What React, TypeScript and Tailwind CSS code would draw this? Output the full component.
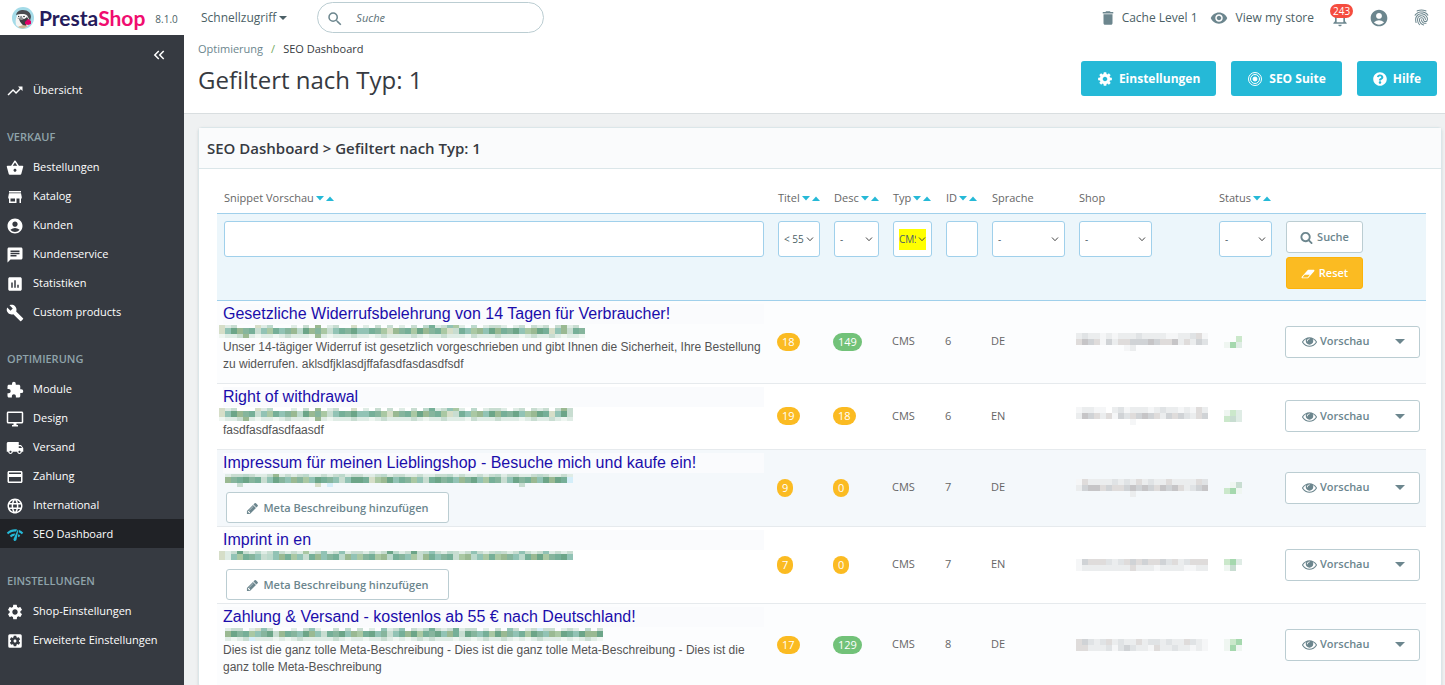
import type { ReactNode } from "react";
import { IoFingerPrint } from "react-icons/io5";
import { FaQuestionCircle } from "react-icons/fa";
import {
  MdAccountCircle,
  MdAssessment,
  MdBuild,
  MdChat,
  MdDelete,
  MdExtension,
  MdKeyboardDoubleArrowLeft,
  MdLanguage,
  MdLocalShipping,
  MdNetworkCheck,
  MdNotificationsNone,
  MdOutlineDesktopWindows,
  MdPayment,
  MdRemoveRedEye,
  MdSearch,
  MdSettings,
  MdSettingsApplications,
  MdShoppingBasket,
  MdStore,
  MdTrendingUp,
} from "react-icons/md";

const navSections = [
  { title: "", items: [{ label: "Übersicht", icon: MdTrendingUp }] },
  {
    title: "VERKAUF",
    items: [
      { label: "Bestellungen", icon: MdShoppingBasket },
      { label: "Katalog", icon: MdStore },
      { label: "Kunden", icon: MdAccountCircle },
      { label: "Kundenservice", icon: MdChat },
      { label: "Statistiken", icon: MdAssessment },
      { label: "Custom products", icon: MdBuild },
    ],
  },
  {
    title: "OPTIMIERUNG",
    items: [
      { label: "Module", icon: MdExtension },
      { label: "Design", icon: MdOutlineDesktopWindows },
      { label: "Versand", icon: MdLocalShipping },
      { label: "Zahlung", icon: MdPayment },
      { label: "International", icon: MdLanguage },
      { label: "SEO Dashboard", icon: MdNetworkCheck, active: true },
    ],
  },
  {
    title: "EINSTELLUNGEN",
    items: [
      { label: "Shop-Einstellungen", icon: MdSettings },
      { label: "Erweiterte Einstellungen", icon: MdSettingsApplications },
    ],
  },
];

const columns = [
  { label: "Snippet Vorschau", sortable: true, width: "" },
  { label: "Titel", sortable: true, width: "w-[56px]" },
  { label: "Desc", sortable: true, width: "w-[59px]" },
  { label: "Typ", sortable: true, width: "w-[53px]" },
  { label: "ID", sortable: true, width: "w-[46px]" },
  { label: "Sprache", sortable: false, width: "w-[87px]" },
  { label: "Shop", sortable: false, width: "w-[140px]" },
  { label: "Status", sortable: true, width: "w-[67px]" },
];

// Pixelated (redacted) values, one letter per 6px block
const urlStrips = [
  [
    "aik...aif...i.k.d.ik..a.i.k.k.i.k.fhikbgi.f.ikki.ik.kik.kdik.",
    "abcdehkbghbedfcdegkbhecbbhegadehgcdehgakhbgdbcdhecbgdchabdkhe",
    "jiikdijiijikiiijdijiiikiijikiiiikijiikiiijkiiikiiijikiikijiij",
  ],
  [
    "aik...aif...i.k.d.ik..a.i.k.k.i.k.fhikbgi.f.ikki.ik.kik.kdk",
    "abcdehkbghbedfcdegkbhecbbhegadehgcdehgakhbgdbcdhecbgdchabck",
    "jiikdijiijikiiijdijiiikiijikiiiikijiikiiijkiiikiiijikiikiji",
  ],
  [
    ".ikkfkiikdikikfiikikfikkiikfikkiikiikkfikiikikfikkiikfkiiki",
    ".dehcehkbcebdegbchebkbcchagdcbhegbkhcehbdecbghekbcehdbcdchl",
    "...k............a.l...............................k........",
  ],
  [
    "aikckifikbkikigikbikbikkifikcfikckfbkifkikbkikfkikbkikbikik",
    "aibghebkfbdhgbkhdbehfdbgehgdfhebgkdhbehkgdfbghgdebfhdcgehcb",
    "...........................................................",
  ],
  [
    ".ikk.iabk...i.kbi..k.f.k.i.bikb.kifhkikhikk.i.k.bk.iklkk.iki.f.k",
    ".dcehgbeckdhebcdbkhecbdghcbekbhdcghecbdhkcebhgcdebhgcebdgchbcddc",
    ".ijikliiijijikiiiiikijiijiikijijikikiiijiijikiikijijikiiijijikij",
  ],
];

const shopStrips = [
  ["uvuuxuxuuuvuuuuxxuuvwx", "wzywxyuwwyyyzywwzuwuyv", "........xu............"],
  ["xuuxx.uvxuuuxuvuuxuxwu", "uzywuwxyvwyzywuywyvuwy", ".........x............"],
  ["xwuuuuvuvuwuvuuwuuuuwv", "uyzzwywwyzyzywzyzwuvyz", ".........u............"],
  ["xywwwvuvwywywwyvwuvwww", "xuuuuuuuuwuuuxuuuuxxuu"],
  ["wyvuvwuvuuwuvvuvuuwvux", "wwuuuvxvyvuuxwuuvuuxux"],
];

const statusStrips = [
  ["..q", "jpi"],
  ["jqi", "qki"],
  [".jk", "qpj"],
  ["qpi", "jk."],
  ["jqp", "jpj"],
];

const palette: Record<string, string> = {
  a: "#d6dec8",
  b: "#92c3b5",
  c: "#6ca588",
  d: "#9ab992",
  e: "#86b59d",
  f: "#bcd9cc",
  g: "#aac8a3",
  h: "#76af98",
  i: "#dfece5",
  j: "#eff6f1",
  k: "#c8ddd1",
  l: "#d4eef9",
  p: "#a5d8ae",
  q: "#cbe8cb",
  u: "#ebedee",
  v: "#e0e3e5",
  w: "#dfdcdb",
  x: "#f5f6f7",
  y: "#d0d3d6",
  z: "#c6c5c7",
};

type Row = {
  title: string;
  desc?: string;
  titleCount: number;
  descCount: number;
  id: number;
  lang: string;
  bg: string;
};

const rows: Row[] = [
  {
    title: "Gesetzliche Widerrufsbelehrung von 14 Tagen für Verbraucher!",
    desc: "Unser 14-tägiger Widerruf ist gesetzlich vorgeschrieben und gibt Ihnen die Sicherheit, Ihre Bestellung zu widerrufen. aklsdfjklasdjffafasdfasdasdfsdf",
    titleCount: 18,
    descCount: 149,
    id: 6,
    lang: "DE",
    bg: "bg-[#fcfdfe]",
  },
  {
    title: "Right of withdrawal",
    desc: "fasdfasdfasdfaasdf",
    titleCount: 19,
    descCount: 18,
    id: 6,
    lang: "EN",
    bg: "bg-white",
  },
  {
    title: "Impressum für meinen Lieblingshop - Besuche mich und kaufe ein!",
    titleCount: 9,
    descCount: 0,
    id: 7,
    lang: "DE",
    bg: "bg-[#f4f8fb]",
  },
  { title: "Imprint in en", titleCount: 7, descCount: 0, id: 7, lang: "EN", bg: "bg-white" },
  {
    title: "Zahlung & Versand - kostenlos ab 55 € nach Deutschland!",
    desc: "Dies ist die ganz tolle Meta-Beschreibung - Dies ist die ganz tolle Meta-Beschreibung - Dies ist die ganz tolle Meta-Beschreibung",
    titleCount: 17,
    descCount: 129,
    id: 8,
    lang: "DE",
    bg: "bg-[#fcfdfe]",
  },
];

const glyphs = {
  eye: "M1664 960q-152-236-381-353 61 104 61 225 0 185-131.5 316.5t-316.5 131.5-316.5-131.5-131.5-316.5q0-121 61-225-229 117-381 353 133 205 333.5 326.5t434.5 121.5 434.5-121.5 333.5-326.5zm-720-384q0-20-14-34t-34-14q-125 0-214.5 89.5t-89.5 214.5q0 20 14 34t34 14 34-14 14-34q0-86 61-147t147-61q20 0 34-14t14-34zm848 384q0 34-20 69-140 230-376.5 368.5t-499.5 138.5-499.5-139-376.5-368q-20-35-20-69t20-69q140-229 376.5-368t499.5-139 499.5 139 376.5 368q20 35 20 69z",
  search:
    "M1216 832q0-185-131.5-316.5t-316.5-131.5-316.5 131.5-131.5 316.5 131.5 316.5 316.5 131.5 316.5-131.5 131.5-316.5zm512 832q0 52-38 90t-90 38q-54 0-90-38l-343-342q-179 124-399 124-143 0-273.5-55.5t-225-150-150-225-55.5-273.5 55.5-273.5 150-225 225-150 273.5-55.5 273.5 55.5 225 150 150 225 55.5 273.5q0 220-124 399l343 343q37 37 37 90z",
  eraser:
    "M960 1408l336-384h-768l-336 384h768zm1013-1077q15 34 9.5 71.5t-30.5 65.5l-896 1024q-38 44-96 44h-768q-38 0-69.5-20.5t-47.5-54.5q-15-34-9.5-71.5t30.5-65.5l896-1024q38-44 96-44h768q38 0 69.5 20.5t47.5 54.5z",
  pencil:
    "M491 1536l91-91-235-235-91 91v107h128v128h107zm523-928q0-22-22-22-10 0-17 7l-542 542q-7 7-7 17 0 22 22 22 10 0 17-7l542-542q7-7 7-17zm-54-192l416 416-832 832h-416v-416zm683 96q0 53-37 90l-166 166-416-416 166-165q36-38 90-38 53 0 91 38l235 234q37 39 37 91z",
  cog: "M1152 896q0-106-75-181t-181-75-181 75-75 181 75 181 181 75 181-75 75-181zm512-109v222q0 12-8 23t-20 13l-185 28q-19 54-39 91 35 50 107 138 10 12 10 25t-9 23q-27 37-99 108t-94 71q-12 0-26-9l-138-108q-44 23-91 38-16 136-29 186-7 28-36 28h-222q-14 0-24.5-8.5t-11.5-21.5l-28-184q-49-16-90-37l-141 107q-10 9-25 9-14 0-25-11-126-114-165-168-7-10-7-23 0-12 8-23 15-21 51-66.5t54-70.5q-27-50-41-99l-183-27q-13-2-21-12.5t-8-23.5v-222q0-12 8-23t19-13l186-28q14-46 39-92-40-57-107-138-10-12-10-24 0-10 9-23 26-36 98.5-107.5t94.5-71.5q13 0 26 10l138 107q44-23 91-38 16-136 29-186 7-28 36-28h222q14 0 24.5 8.5t11.5 21.5l28 184q49 16 90 37l142-107q9-9 24-9 13 0 25 10 129 119 165 170 7 8 7 22 0 12-8 23-15 21-51 66.5t-54 70.5q26 50 41 98l183 28q13 2 21 12.5t8 23.5z",
};

function Glyph({ name, className }: { name: keyof typeof glyphs; className: string }) {
  return (
    <svg
      viewBox={name === "eraser" ? "0 0 2048 1792" : "0 0 1792 1792"}
      className={`shrink-0 fill-current ${className}`}
      aria-hidden="true"
    >
      <path d={glyphs[name]} />
    </svg>
  );
}

// heights: block height for each line of the strip
function Mosaic({ lines, heights, className = "" }: { lines: string[]; heights: number[]; className?: string }) {
  const width = Math.max(...lines.map((l) => l.length)) * 6;
  const used = heights.slice(0, lines.length);
  const tops = used.map((_, i) => used.slice(0, i).reduce((a, b) => a + b, 0));
  const height = used.reduce((a, b) => a + b, 0);

  return (
    <svg
      width={width}
      height={height}
      viewBox={`0 0 ${width} ${height}`}
      shapeRendering="crispEdges"
      className={`block ${className}`}
      aria-hidden="true"
    >
      {lines.flatMap((line, y) =>
        line.split("").map((c, x) =>
          palette[c] ? (
            <rect key={`${x}-${y}`} x={x * 6} y={tops[y]} width={6} height={used[y]} fill={palette[c]} />
          ) : null,
        ),
      )}
    </svg>
  );
}

function Logo() {
  return (
    <a href="#" className="flex items-center gap-[5px] text-[21px] leading-8">
      <svg viewBox="0 0 22 22" className="size-[22px]" aria-hidden="true">
        <circle cx="11" cy="11" r="11" fill="#a4dbe8" />
        <path d="M4 18c-1-5 0-9 3-12l9 1c2 4 2 9-1 13-3 2-9 1-11-2z" fill="#f5f4f2" />
        <path d="M4 8c1-4 4-5 7-5 5 0 8 3 8 7l-1 4-2-4c-1-3-4-3-6-3-2 0-4 0-6 1z" fill="#4a4b50" />
        <path d="M7 12c3 1 6 0 8-2l2 3-3 3c1 2 0 3-1 4-2-2-5-4-6-8z" fill="#3c3d42" />
        <path d="M5 11c1-2 5-3 8-1l-2 2c-2 1-4 0-6-1z" fill="#8e9194" />
        <circle cx="6.500" cy="9.500" r="1.600" fill="#fff" />
        <circle cx="12" cy="9.500" r="1.900" fill="#fff" />
        <circle cx="6.700" cy="9.500" r=".7" fill="#222" />
        <circle cx="12" cy="9.500" r=".8" fill="#222" />
        <path d="M13 15l3-3 3 2v3l-3 1-3-1z" fill="#df0067" />
        <path d="M6 20c3-2 7-2 10-1-3 3-7 3-10 1z" fill="#cbb394" />
      </svg>
      <span className="font-['Lato','Open_Sans',sans-serif] font-bold text-[#251b5b]">
        Presta<span className="text-[#f00d70]">Shop</span>
      </span>
    </a>
  );
}

function TopBar() {
  return (
    <header className="flex h-[35px] shrink-0 items-center bg-white text-xs text-[#4b5f66]">
      <div className="flex w-[201px] shrink-0 items-center gap-2.5 pl-3">
        <Logo />
        <span className="pt-1 text-[10px]">8.1.0</span>
      </div>
      <button type="button" className="flex items-center gap-[3px]">
        Schnellzugriff
        <svg viewBox="0 0 8 4" className="w-2 fill-current" aria-hidden="true">
          <path d="M0 0h8L4 4z" />
        </svg>
      </button>
      <label className="ml-[30px] flex h-[31px] w-[227px] items-center gap-3 rounded-full border border-[#bbcdd2] pt-0.5 pr-4 pl-2">
        <MdSearch className="size-[18px] shrink-0 text-[#6c868e]" />
        <input
          type="text"
          aria-label="Suche"
          placeholder="Suche"
          className="min-w-0 flex-1 bg-transparent text-[11px] italic outline-none placeholder:text-[#5a6f76]"
        />
      </label>
      <nav className="ml-auto flex items-center pr-[15px]">
        <a href="#" className="flex items-center gap-[5px]">
          <MdDelete className="size-[18px] text-[#6c868e]" />
          Cache Level 1
        </a>
        <a href="#" className="ml-3 flex items-center gap-2">
          <MdRemoveRedEye className="size-[18px] text-[#6c868e]" />
          View my store
        </a>
        <button type="button" aria-label="Benachrichtigungen" className="relative ml-4">
          <MdNotificationsNone className="size-5 text-[#6c868e]" />
          <span className="absolute -top-1 left-0 rounded-full bg-[#f54c3e] px-[3px] text-[10px] leading-[14px] text-white">
            243
          </span>
        </button>
        <button type="button" aria-label="Konto" className="ml-[19px]">
          <MdAccountCircle className="size-5 text-[#6c868e]" />
        </button>
        <button type="button" aria-label="Anmeldung" className="ml-6">
          <IoFingerPrint className="size-[17px] text-[#6c868e]" />
        </button>
      </nav>
    </header>
  );
}

function Sidebar() {
  return (
    <aside className="flex w-[184px] shrink-0 flex-col bg-[#363a41] text-white">
      <div className="flex h-10 items-center justify-end pr-4">
        <button type="button" aria-label="Menü einklappen">
          <MdKeyboardDoubleArrowLeft className="size-[18px]" />
        </button>
      </div>
      <nav className="flex flex-col gap-[18px] text-[11px]">
        {navSections.map((section) => (
          <div key={section.title}>
            {section.title && (
              <h2 className="pl-[7px] leading-[30px] font-semibold text-[#8fa3aa]">{section.title}</h2>
            )}
            {section.items.map(({ label, icon: Icon, active }: { label: string; icon: typeof MdStore; active?: boolean }) => (
              <a
                key={label}
                href="#"
                className={`flex h-[29px] items-center gap-[9px] pt-0.5 pl-1.5 ${active ? "bg-[#202226]" : ""}`}
              >
                <Icon className={`size-[18px] shrink-0 ${active ? "text-[#25b9d7]" : ""}`} />
                {label}
              </a>
            ))}
          </div>
        ))}
      </nav>
    </aside>
  );
}

function HeaderButton({ icon, children }: { icon: ReactNode; children: ReactNode }) {
  return (
    <button
      type="button"
      className="flex h-[35px] items-center gap-1.5 rounded-[3px] bg-[#25b9d7] px-4 text-xs font-bold text-white"
    >
      {icon}
      {children}
    </button>
  );
}

function SortArrows() {
  return (
    <svg viewBox="0 0 18 5" className="ml-0.5 inline-block h-[5px] w-[18px] fill-[#25b9d7]" aria-hidden="true">
      <path d="M0 0h8L4 4.500z" />
      <path d="M10 5h8L14 .5z" />
    </svg>
  );
}

function FilterSelect({ label, value, marked }: { label: string; value: string; marked?: boolean }) {
  return (
    <div className="relative flex h-9 items-center rounded-[3px] border border-[#a0d0eb] bg-white px-[5px] pt-0.5 text-[#4b5f66]">
      <select
        aria-label={label}
        className={`h-[21px] w-full min-w-0 appearance-none text-[10px] outline-none ${marked ? "bg-[#ff0] pr-2.5" : "bg-white"}`}
      >
        <option>{value}</option>
      </select>
      <svg
        viewBox="0 0 8 5"
        className="pointer-events-none absolute right-[5px] h-[5px] w-2 fill-none stroke-[#444]"
        aria-hidden="true"
      >
        <path d="M1 .5l3 3.200L7 .5" />
      </svg>
    </div>
  );
}

function Count({ value }: { value: number }) {
  return (
    <span
      className={`inline-block rounded-full px-[5px] text-[11px] leading-[18px] font-medium text-white ${value > 100 ? "bg-[#72c279]" : "bg-[#fbbb22]"}`}
    >
      {value}
    </span>
  );
}

function SnippetRow({ row, index }: { row: Row; index: number }) {
  return (
    <tr className={`border-b border-[#e6eaed] ${row.bg}`}>
      <td className="pt-[3px] pr-[7px] pl-1.5 align-top font-['Liberation_Sans',sans-serif]">
        <a href="#" className="block truncate bg-[#fafbfd] text-base leading-5 text-[#1a0dab]">
          {row.title}
        </a>
        <div className="flex h-[15px] items-center">
          <Mosaic lines={urlStrips[index]} heights={[3, 6, 4]} className="-ml-1 shrink-0" />
        </div>
        {row.desc ? (
          <p className="pb-2.5 text-xs leading-[17px] text-[#545454]">{row.desc}</p>
        ) : (
          <button
            type="button"
            className="mt-1 mb-[3px] ml-[3px] flex h-[31px] w-[223px] items-center justify-center gap-1 rounded-[3px] border border-[#bbcdd2] bg-white pt-0.5 font-['Open_Sans',sans-serif] text-[11px] font-semibold text-[#6c868e]"
          >
            <Glyph name="pencil" className="size-[13px]" />
            Meta Beschreibung hinzufügen
          </button>
        )}
      </td>
      <td className="px-1.5">
        <Count value={row.titleCount} />
      </td>
      <td className="px-1.5">
        <Count value={row.descCount} />
      </td>
      <td className="px-1.5">CMS</td>
      <td className="px-1.5">{row.id}</td>
      <td className="px-1.5">{row.lang}</td>
      <td className="px-1">
        <Mosaic lines={shopStrips[index]} heights={[6, 6, 6]} />
      </td>
      <td className="px-1.5">
        <Mosaic lines={statusStrips[index]} heights={[6, 6]} className="ml-1.5" />
      </td>
      <td className="px-1.5">
        <div className="flex h-8 rounded-[3px] border border-[#bbcdd2] bg-white font-semibold text-[#6c868e]">
          <button type="button" className="flex flex-1 items-center gap-[3px] pl-4">
            <Glyph name="eye" className="size-[15px]" />
            Vorschau
          </button>
          <button type="button" aria-label="Weitere Aktionen" className="px-3.5">
            <svg viewBox="0 0 10 5" className="w-2.5 fill-current" aria-hidden="true">
              <path d="M0 0h10L5 5z" />
            </svg>
          </button>
        </div>
      </td>
    </tr>
  );
}

export default function App() {
  return (
    <div className="flex h-screen flex-col overflow-hidden bg-[#eff1f2] font-['Open_Sans','Noto_Sans',sans-serif] text-[#363a41]">
      <TopBar />
      <div className="flex min-h-0 flex-1">
        <Sidebar />
        <main className="min-w-0 flex-1">
          <div className="flex h-[79px] items-start justify-between border-b border-[#d9dee0] bg-white pr-2 pl-[14px]">
            <div>
              <nav className="flex gap-2 pt-1.5 text-[11px] leading-4">
                <a href="#" className="text-[#6c868e]">
                  Optimierung
                </a>
                <span className="text-[#72a85c]">/</span>
                <span>SEO Dashboard</span>
              </nav>
              <h1 className="mt-[7px] text-2xl leading-8">Gefiltert nach Typ: 1</h1>
            </div>
            <div className="mt-[26px] flex gap-[15px]">
              <HeaderButton icon={<Glyph name="cog" className="size-4" />}>Einstellungen</HeaderButton>
              <HeaderButton
                icon={
                  <svg viewBox="0 0 16 16" className="size-4 fill-none stroke-white" aria-hidden="true">
                    <circle cx="8" cy="8" r="6.500" />
                    <circle cx="8" cy="8" r="4.500" />
                    <circle cx="8" cy="8" r="2" className="fill-white" />
                  </svg>
                }
              >
                SEO Suite
              </HeaderButton>
              <HeaderButton icon={<FaQuestionCircle className="size-[14px]" />}>Hilfe</HeaderButton>
            </div>
          </div>

          <section className="mt-[13px] mr-[3px] ml-[14px] rounded-[4px] border border-[#dbe6e9] bg-white shadow-sm">
            <h2 className="border-b border-[#dbe6e9] bg-[#fafbfc] px-2 text-[15px] leading-10 font-semibold">
              SEO Dashboard &gt; Gefiltert nach Typ: 1
            </h2>
            <div className="pt-[14px] pr-[15px] pl-[18px]">
              <table className="w-full table-fixed border-collapse text-[11px] text-[#666]">
                <thead>
                  <tr className="h-[30px] border-b border-[#a0d0eb] text-left">
                    {columns.map((col) => (
                      <th key={col.label} scope="col" className={`px-[7px] font-normal whitespace-nowrap ${col.width}`}>
                        {col.label}
                        {col.sortable && <SortArrows />}
                      </th>
                    ))}
                    <td className="w-[147px]" />
                  </tr>
                  <tr className="h-[87px] border-b border-[#a0d0eb] bg-[#ecf6fb] align-top">
                    <td className="px-[7px] pt-[7px]">
                      <input
                        type="text"
                        aria-label="Snippet Vorschau"
                        className="h-9 w-full rounded-[3px] border border-[#a0d0eb] bg-white px-2"
                      />
                    </td>
                    <td className="px-[7px] pt-[7px]">
                      <FilterSelect label="Titel" value="< 55" />
                    </td>
                    <td className="px-[7px] pt-[7px]">
                      <FilterSelect label="Desc" value="-" />
                    </td>
                    <td className="px-[7px] pt-[7px]">
                      <FilterSelect label="Typ" value="CMS" marked />
                    </td>
                    <td className="px-[7px] pt-[7px]">
                      <input
                        type="text"
                        aria-label="ID"
                        className="h-9 w-full rounded-[3px] border border-[#a0d0eb] bg-white px-1"
                      />
                    </td>
                    <td className="px-[7px] pt-[7px]">
                      <FilterSelect label="Sprache" value="-" />
                    </td>
                    <td className="pt-[7px] pr-[60px] pl-[7px]">
                      <FilterSelect label="Shop" value="-" />
                    </td>
                    <td className="px-[7px] pt-[7px]">
                      <FilterSelect label="Status" value="-" />
                    </td>
                    <td className="px-[7px] pt-[7px]">
                      <div className="flex w-[77px] flex-col gap-1 text-[11px] font-semibold">
                        <button
                          type="button"
                          className="flex h-8 items-center justify-center gap-1 rounded-[3px] border border-[#bbcdd2] bg-white pt-0.5 text-[#6c868e]"
                        >
                          <Glyph name="search" className="size-[13px]" />
                          Suche
                        </button>
                        <button
                          type="button"
                          className="flex h-8 items-center justify-center gap-1 rounded-[3px] border border-[#fcb30a] bg-[#fbbb22] pt-0.5 text-white"
                        >
                          <Glyph name="eraser" className="h-3 w-[14px]" />
                          Reset
                        </button>
                      </div>
                    </td>
                  </tr>
                </thead>
                <tbody>
                  {rows.map((row, index) => (
                    <SnippetRow key={row.title} row={row} index={index} />
                  ))}
                </tbody>
              </table>
            </div>
          </section>
        </main>
      </div>
    </div>
  );
}
